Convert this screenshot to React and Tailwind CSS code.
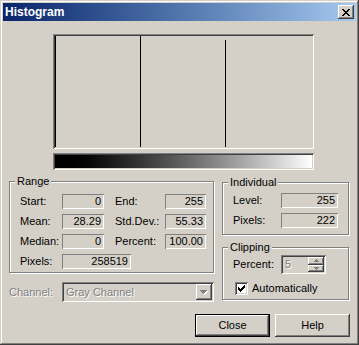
/**
 * Histogram dialog — Windows classic look
 */

const raised =
  'shadow-[inset_-1px_-1px_#404040,inset_1px_1px_#fff,inset_-2px_-2px_#808080,inset_2px_2px_#d4d0c8]';
const sunken =
  'shadow-[inset_1px_1px_#808080,inset_-1px_-1px_#fff,inset_2px_2px_#404040,inset_-2px_-2px_#d4d0c8]';
const staticEdge = 'shadow-[inset_1px_1px_#808080,inset_-1px_-1px_#fff]';
const grayText = 'text-[#808080] [text-shadow:1px_1px_0_#fff]';

function pixels(rows) {
  // build a path from a tiny pixel pattern
  let d = '';
  rows.forEach((row, y) => {
    [...row].forEach((c, x) => {
      if (c === 'x') d += `M${x} ${y}h1v1h-1z`;
    });
  });
  return d;
}

const X_GLYPH = pixels(['xx....xx', '.xx..xx.', '..xxxx..', '...xx...', '..xxxx..', '.xx..xx.', 'xx....xx']);
const CHECK = pixels(['......x', '.....xx', 'x...xxx', 'xx.xxx.', 'xxxxx..', '.xxx...', '..x....']);
const DOWN = pixels(['xxxxxxx', '.xxxxx.', '..xxx..', '...x...']);

function Group({ title, className, children }) {
  return (
    <div
      className={`relative border border-[#808080] shadow-[inset_1px_1px_#fff,1px_1px_#fff] ${className}`}
    >
      <span className="absolute -top-[8px] left-[5px] px-[2px] bg-[#d4d0c8] leading-[14px]">{title}</span>
      {children}
    </div>
  );
}

function Field({ value, w }) {
  return (
    <div className={`h-[15px] ${w} ${staticEdge} text-right pr-[3px] leading-[15px]`}>{value}</div>
  );
}

export default function App() {
  return (
    <div className="w-[359px] h-[345px] bg-[#d4d0c8] p-[3px] flex flex-col overflow-hidden font-['Liberation_Sans',Arial,sans-serif] text-[11px] text-black shadow-[inset_-1px_-1px_#404040,inset_1px_1px_#d4d0c8,inset_-2px_-2px_#808080,inset_2px_2px_#fff]">
      <div className="h-[18px] flex items-center justify-between pl-[2px] pr-[2px] bg-linear-to-r from-[#0a246a] to-[#a6caf0]">
        <span className="text-white font-bold text-[12px] leading-[18px]">Histogram</span>
        <button type="button" className={`w-[16px] h-[14px] bg-[#d4d0c8] ${raised} flex items-center justify-center`}>
          <svg width="8" height="7" viewBox="0 0 8 7" className="mr-[1px]">
            <path d={X_GLYPH} fill="#000" />
          </svg>
        </button>
      </div>

      <div className={`mt-[13px] ml-[50px] w-[261px] h-[115px] p-[2px] ${sunken}`}>
        <svg width="257" height="111" viewBox="0 0 257 111" className="block">
          <rect x="0" y="0" width="1" height="111" fill="#000" />
          <rect x="85" y="0" width="1" height="111" fill="#000" />
          <rect x="170" y="4" width="1" height="107" fill="#000" />
        </svg>
      </div>

      <div className={`mt-[4px] ml-[50px] w-[261px] h-[17px] p-[2px] ${sunken}`}>
        <div className="w-full h-full bg-linear-to-r from-black to-white" />
      </div>

      <div className="flex mt-[11px] ml-[6px]">
        <div className="flex flex-col">
          <Group title="Range" className="w-[205px] h-[92px] pt-[12px] pl-[10px]">
            <div className="flex flex-col gap-[5px]">
              {[
                ['Start:', '0', 'End:', '255'],
                ['Mean:', '28.29', 'Std.Dev.:', '55.33'],
                ['Median:', '0', 'Percent:', '100.00'],
              ].map(([a, av, b, bv]) => (
                <div key={a} className="grid grid-cols-[42px_42px_61px_41px] items-center leading-[15px]">
                  <span>{a}</span>
                  <Field value={av} w="w-[42px]" />
                  <span className="pl-[11px]">{b}</span>
                  <Field value={bv} w="w-[41px]" />
                </div>
              ))}
              <div className="flex items-center leading-[15px]">
                <span className="w-[42px]">Pixels:</span>
                <Field value="258519" w="w-[69px]" />
              </div>
            </div>
          </Group>

          <div className="flex items-center mt-[9px] h-[20px]">
            <span className={`w-[53px] ${grayText}`}>Channel:</span>
            <div className={`w-[152px] h-[20px] p-[2px] ${sunken} flex items-stretch`}>
              <span className={`flex-1 pl-[2px] leading-[16px] ${grayText}`}>Gray Channel</span>
              <div className={`w-[16px] bg-[#d4d0c8] ${raised} flex items-center justify-center`}>
                <svg width="8" height="5" viewBox="0 0 8 5">
                  <path d={DOWN} fill="#fff" transform="translate(1 1)" />
                  <path d={DOWN} fill="#808080" />
                </svg>
              </div>
            </div>
          </div>
        </div>

        <div className="flex flex-col ml-[8px]">
          <Group title="Individual" className="mt-[1px] w-[127px] h-[53px] pt-[10px] pl-[10px]">
            <div className="flex flex-col gap-[5px]">
              <div className="flex items-center leading-[15px]">
                <span className="w-[48px]">Level:</span>
                <Field value="255" w="w-[57px]" />
              </div>
              <div className="flex items-center leading-[15px]">
                <span className="w-[48px]">Pixels:</span>
                <Field value="222" w="w-[57px]" />
              </div>
            </div>
          </Group>

          <Group title="Clipping" className="mt-[12px] w-[127px] h-[53px] pt-[7px] pl-[10px]">
            <div className="flex items-center">
              <span className="w-[48px]">Percent:</span>
              <div className={`w-[45px] h-[19px] p-[2px] ${sunken} flex`}>
                <span className={`flex-1 pl-[2px] leading-[15px] ${grayText}`}>5</span>
                <div className="w-[16px] flex flex-col">
                  {[0, 1].map((i) => (
                    <div key={i} className={`flex-1 bg-[#d4d0c8] ${raised} flex items-center justify-center`}>
                      <svg width="5" height="3" viewBox="0 0 5 3">
                        <path
                          d={i === 0 ? 'M2 0h1v1h1v1h1v1H0V2h1V1h1z' : 'M0 0h5v1H4v1H3v1H2V2H1V1H0z'}
                          fill="#808080"
                        />
                      </svg>
                    </div>
                  ))}
                </div>
              </div>
            </div>
            <div className="flex items-center mt-[8px] pl-[2px]">
              <div className={`w-[13px] h-[13px] bg-white ${sunken} flex items-center justify-center`}>
                <svg width="7" height="7" viewBox="0 0 7 7">
                  <path d={CHECK} fill="#000" />
                </svg>
              </div>
              <span className="ml-[4px] leading-[13px]">Automatically</span>
            </div>
          </Group>
        </div>
      </div>

      <div className="flex justify-end gap-[5px] mt-[12px] pr-[6px]">
        <button type="button" className="w-[75px] h-[23px] border border-black bg-[#d4d0c8] p-0">
          <div className={`w-full h-full ${raised} flex items-center justify-center`}>Close</div>
        </button>
        <button type="button" className={`w-[75px] h-[23px] bg-[#d4d0c8] ${raised} flex items-center justify-center`}>
          Help
        </button>
      </div>
    </div>
  );
}
